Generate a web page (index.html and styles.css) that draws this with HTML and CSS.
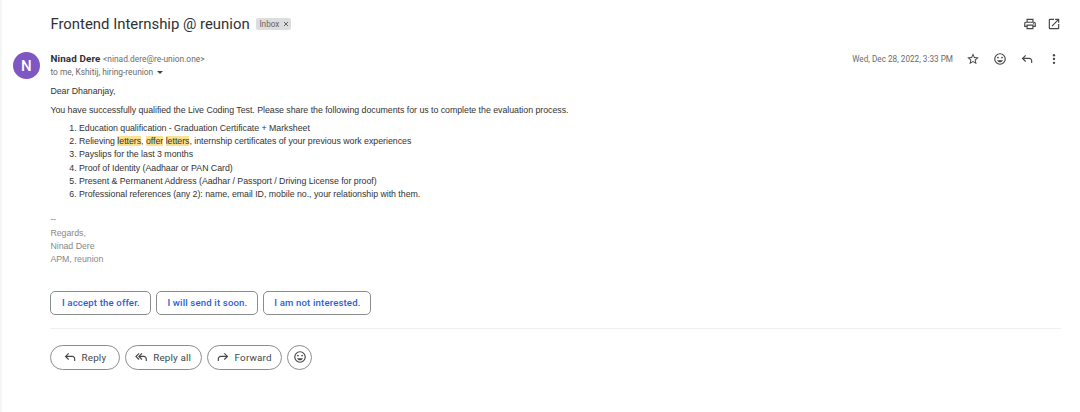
FILE: index.html
```
<!DOCTYPE html>
<html lang="en">

<head>
    <meta charset="utf-8">
    <meta name="viewport" content="width=device-width, initial-scale=1.0">
    <title>Frontend Internship @ reunion</title>
    <link rel="stylesheet" href="styles.css">
</head>

<body>
    <svg class="sprite" width="0" height="0">
        <symbol id="reply" viewBox="0 -960 960 960">
            <path d="M760-200v-160q0-50-35-85t-85-35H273l144 144-57 56-240-240 240-240 57 56-144 144h367q83 0 141.5 58.5T840-360v160h-80Z" />
        </symbol>
        <symbol id="smile" viewBox="0 0 24 24">
            <circle cx="12" cy="12" r="9" fill="none" stroke="currentColor" stroke-width="2" />
            <circle cx="8.5" cy="9.5" r="1.5" />
            <circle cx="15.5" cy="9.5" r="1.5" />
            <path d="M7 14h10c-.8 2.200-2.700 3.500-5 3.500S7.800 16.200 7 14z" />
        </symbol>
    </svg>

    <main class="mail">
        <header class="subject-row">
            <h1 class="subject">Frontend Internship @ reunion</h1>
            <span class="label"><span class="label-name">Inbox</span><svg class="label-close" viewBox="0 0 6 6"><path d="M1 1l4 4M5 1L1 5" /></svg></span>
            <div class="subject-tools">
                <svg class="icon" viewBox="0 -960 960 960"><path d="M640-640v-120H320v120h-80v-200h480v200h-80Zm80 180q17 0 28.500-11.500T760-500q0-17-11.500-28.500T720-540q-17 0-28.500 11.500T680-500q0 17 11.500 28.500T720-460Zm-80 260v-160H320v160h320Zm80 80H240v-160H80v-240q0-51 35-85.500t85-34.500h560q51 0 85.500 34.500T880-520v240H720v160Zm80-240v-160q0-17-11.500-28.500T760-560H200q-17 0-28.500 11.500T160-520v160h80v-80h480v80h80Z" /></svg>
                <svg class="icon" viewBox="0 0 24 24"><path d="M19 19H5V5h7V3H5a2 2 0 0 0-2 2v14a2 2 0 0 0 2 2h14a2 2 0 0 0 2-2v-7h-2v7zM14 3v2h3.590l-9.830 9.830 1.410 1.410L19 6.410V10h2V3h-7z" /></svg>
            </div>
        </header>

        <section class="sender-row">
            <div class="avatar">N</div>
            <div class="sender">
                <div class="from"><span class="name">Ninad Dere</span><span class="address">&lt;ninad.dere@re-union.one&gt;</span></div>
                <div class="to"><span class="to-text">to me, Kshitij, hiring-reunion</span><span class="arrow"></span></div>
            </div>
            <div class="sender-tools">
                <span class="date">Wed, Dec 28, 2022, 3:33 PM</span>
                <svg class="icon" viewBox="0 0 24 24"><path d="M22 9.240l-7.190-.620L12 2 9.190 8.630 2 9.240l5.460 4.730L5.820 21 12 17.270 18.180 21l-1.630-7.030L22 9.240zM12 15.400l-3.760 2.270 1-4.280-3.320-2.880 4.380-.380L12 6.100l1.710 4.040 4.380.380-3.320 2.880 1 4.280L12 15.400z" /></svg>
                <svg class="icon"><use href="#smile" /></svg>
                <svg class="icon"><use href="#reply" /></svg>
                <svg class="icon" viewBox="0 0 24 24"><circle cx="12" cy="5.500" r="2" /><circle cx="12" cy="12" r="2" /><circle cx="12" cy="18.500" r="2" /></svg>
            </div>
        </section>

        <article class="message">
            <p class="greeting">Dear Dhananjay,</p>
            <p class="intro">You have successfully qualified the Live Coding Test. Please share the following documents for us to complete the evaluation process.</p>
            <ol class="documents">
                <li>Education qualification - Graduation Certificate + Marksheet</li>
                <li>Relieving <mark>letters</mark>, <mark>offer</mark> <mark>letters</mark>, internship certificates of your previous work experiences</li>
                <li>Payslips for the last 3 months</li>
                <li>Proof of Identity (Aadhaar or PAN Card)</li>
                <li>Present &amp; Permanent Address (Aadhar / Passport / Driving License for proof)</li>
                <li>Professional references (any 2): name, email ID, mobile no., your relationship with them.</li>
            </ol>
            <div class="signature">
                <div>--</div>
                <div>Regards,</div>
                <div>Ninad Dere</div>
                <div>APM, reunion</div>
            </div>
        </article>

        <div class="suggestions">
            <button class="chip accept">I accept the offer.</button>
            <button class="chip send">I will send it soon.</button>
            <button class="chip decline">I am not interested.</button>
        </div>

        <footer class="actions">
            <button class="pill pill-reply"><svg class="icon"><use href="#reply" /></svg>Reply</button>
            <button class="pill pill-all"><svg class="icon" viewBox="0 -960 960 960"><path d="M320-280 80-520l240-240 57 56-184 184 184 184-57 56Zm480 80v-160q0-50-35-85t-85-35H433l144 144-57 56-240-240 240-240 57 56-144 144h247q83 0 141.500 58.500T880-360v160h-80Z" /></svg>Reply all</button>
            <button class="pill pill-forward"><svg class="icon flip"><use href="#reply" /></svg>Forward</button>
            <button class="pill pill-emoji" aria-label="Add reaction"><svg class="icon"><use href="#smile" /></svg></button>
        </footer>
    </main>
</body>

</html>
```
FILE: styles.css
```
:root {
    --text: #333333;
    --title: #303133;
    --muted: #6b6b6b;
    --icon: #444746;
    --link: #1f62d3;
    --outline: #8b8d8c;
    --sans: Roboto, "Liberation Sans", sans-serif;
}

*,
::before,
::after {
    box-sizing: border-box;
    padding: 0;
    margin: 0;
}

body {
    height: 412px;
    overflow: hidden;
    background: #ffffff;
    border-left: 2px solid #f4f5f6;
    font-family: var(--sans);
    color: var(--text);
}

.sprite {
    display: none;
}

.mail {
    padding: 13px 19px 0 48.4px;
}

.icon {
    display: block;
    flex: none;
    width: 14px;
    height: 14px;
    fill: var(--icon);
    color: var(--icon);
}

.flip {
    transform: scaleX(-1);
}

/* subject */
.subject-row {
    display: flex;
    align-items: center;
    height: 22px;
}

.subject {
    width: 199px;
    font: 400 14.9px/22px var(--sans);
    letter-spacing: 0;
    color: var(--title);
    white-space: nowrap;
}

.label {
    display: flex;
    align-items: center;
    gap: 4px;
    width: 35px;
    height: 12px;
    margin-left: 7px;
    padding: 0 3px;
    border-radius: 2px;
    background: #dddddd;
    font-size: 8.2px;
    color: #666666;
}

.label-close {
    flex: none;
    width: 6px;
    height: 6px;
    stroke: #666666;
    stroke-width: 1;
}

.subject-tools {
    display: flex;
    gap: 10px;
    margin-left: auto;
}

/* sender */
.sender-row {
    display: flex;
    margin-top: 16px;
    height: 30px;
}

.avatar {
    flex: none;
    width: 27px;
    height: 27px;
    margin: 1px 10.6px 0 -37.6px;
    border-radius: 50%;
    background: #7e57c2;
    color: #ffffff;
    font: 500 15px/28px var(--sans);
    text-align: center;
}

.from {
    display: flex;
    align-items: baseline;
    gap: 2.5px;
    height: 15px;
    line-height: 15px;
    white-space: nowrap;
}

.name {
    font: 700 9.8px/15px var(--sans);
    letter-spacing: 0.15px;
    color: var(--title);
}

.address,
.to,
.date {
    font-size: 8.4px;
    color: var(--muted);
}

.to {
    display: flex;
    align-items: center;
    gap: 4px;
    height: 12px;
}

.arrow {
    border: 3px solid transparent;
    border-top-color: var(--icon);
    border-bottom: 0;
}

.sender-tools {
    display: flex;
    align-items: center;
    gap: 13px;
    height: 15px;
    margin-left: auto;
}

.date {
    font-size: 8.2px;
}

/* message body */
.message {
    font: 8.8px/13.2px "Liberation Sans", Arial, sans-serif;
    letter-spacing: -0.028px;
    white-space: nowrap;
}

.greeting {
    margin-top: 3.5px;
}

.intro {
    margin-top: 6px;
}

.documents {
    margin-top: 5px;
    padding-left: 28.6px;
}

.documents mark {
    background: #fbe08f;
    color: inherit;
}

.signature {
    margin-top: 12.2px;
    color: #888888;
}

/* suggested replies */
.suggestions {
    display: flex;
    gap: 5px;
    height: 62px;
    margin-top: 1.3px;
    padding-top: 24px;
    border-bottom: 1px solid #f0f0f0;
}

.chip,
.pill {
    display: flex;
    align-items: center;
    justify-content: center;
    height: 24px;
    padding-bottom: 1px;
    border: 1px solid var(--outline);
    background: #ffffff;
    white-space: nowrap;
}

.chip {
    border-radius: 5px;
    font: 500 9.6px var(--sans);
    letter-spacing: 0.15px;
    color: var(--link);
}

.accept {
    width: 101px;
}

.send {
    width: 102px;
}

.decline {
    width: 108px;
}

/* bottom actions */
.actions {
    display: flex;
    gap: 5px;
    margin-top: 16px;
}

.pill {
    gap: 5px;
    height: 25px;
    padding-right: 2px;
    border-radius: 13px;
    font: 400 9.9px var(--sans);
    letter-spacing: 0.15px;
    color: var(--icon);
}

.pill-reply {
    width: 70px;
}

.pill-all {
    width: 76.5px;
}

.pill-forward {
    width: 75.5px;
}

.pill-emoji {
    width: 25px;
    padding-right: 0;
}
```
